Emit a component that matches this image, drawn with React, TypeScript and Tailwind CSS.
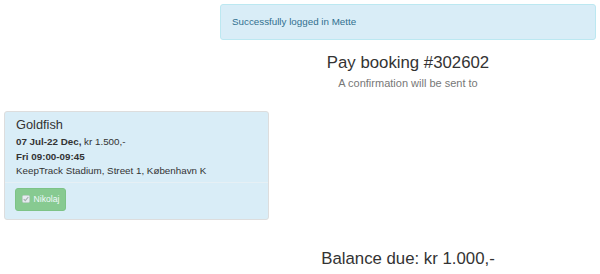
import React from "react";

const font = { fontFamily: '"Liberation Sans", Arial, sans-serif' };

export default function App() {
  return (
    <div className="w-[600px] h-[274px] bg-white text-[#333] overflow-hidden" style={font}>
      {/* Right column: alert + heading */}
      <div className="ml-[220px] w-[376px] pt-[4px]">
        <div className="h-[36px] flex items-center px-[11px] rounded-[3px] border border-[#bce8f1] bg-[#d9edf7] text-[#31708f] text-[9.8px]">
          Successfully logged in Mette
        </div>
        <h3 className="mt-[14px] text-center text-[16.8px] leading-[18.5px]">Pay booking #302602</h3>
        <p className="mt-[2px] text-center text-[11px] leading-[16px] text-[#777]">A confirmation will be sent to</p>
      </div>

      {/* Booking card */}
      <div className="ml-[4px] mt-[20px] w-[265px] rounded-[3px] border border-[#dddddd] bg-[#d9edf7]">
        <div className="px-[11px] pt-[6px] pb-[3px]">
          <h4 className="text-[12.8px] leading-[14px]">Goldfish</h4>
          <div className="mt-[3.5px] text-[9.8px] leading-[14.5px]">
            <div>
              <b>07 Jul-22 Dec,</b> kr 1.500,-
            </div>
            <div>
              <b>Fri 09:00-09:45</b>
            </div>
            <div>KeepTrack Stadium, Street 1, København K</div>
          </div>
        </div>
        <div className="border-t border-[#e6f0f5] px-[10px] pt-[5px] pb-[8px]">
          <button
            disabled
            className="h-[23px] w-[51px] flex items-center justify-center gap-[4px] rounded-[3px] border border-[#4cae4c] bg-[#5cb85c] opacity-65 text-white text-[8.6px]"
          >
            <svg width="8" height="8" viewBox="0 0 8 8">
              <rect x="0.5" y="0.5" width="7" height="7" rx="1" fill="#ececec" stroke="#b8b8b8" strokeWidth="0.6" />
              <path d="M1.7 4.1 L3.3 5.7 L6.3 2" fill="none" stroke="#8a8a8a" strokeWidth="1.1" />
            </svg>
            Nikolaj
          </button>
        </div>
      </div>

      {/* Balance */}
      <div className="ml-[220px] w-[376px] mt-[30px]">
        <h3 className="text-center text-[16.8px] leading-[18.5px]">Balance due: kr 1.000,-</h3>
      </div>
    </div>
  );
}
